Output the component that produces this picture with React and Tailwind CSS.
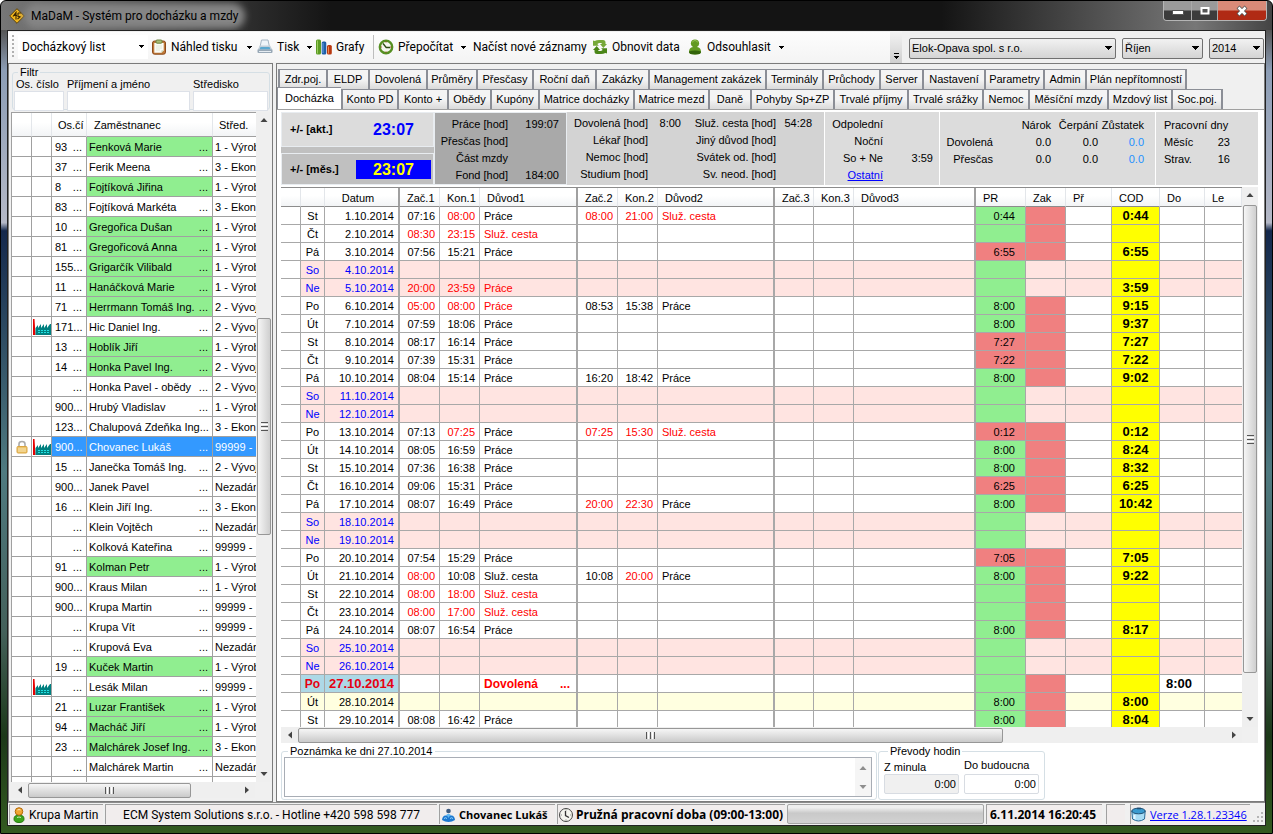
import React from "react";

const EMPLOYEES = [
  ["93", "Fenková Marie", "1 - Výrob", 1],
  ["37", "Ferik Meena", "3 - Ekon", 0],
  ["8", "Fojtíková Jiřina", "1 - Výrob", 1],
  ["83", "Fojtíková Markéta", "3 - Ekon", 0],
  ["10", "Gregořica Dušan", "1 - Výrob", 1],
  ["81", "Gregořicová Anna", "1 - Výrob", 1],
  ["155", "Grigarčík Vilibald", "1 - Výrob", 1],
  ["11", "Hanáčková Marie", "1 - Výrob", 1],
  ["71", "Herrmann Tomáš Ing.", "2 - Vývoj", 1],
  ["171", "Hic Daniel Ing.", "2 - Vývoj", 0, "factory"],
  ["13", "Hoblík Jiří", "1 - Výrob", 1],
  ["14", "Honka Pavel Ing.", "2 - Vývoj", 1],
  ["", "Honka Pavel - obědy", "2 - Vývoj", 0],
  ["900", "Hrubý Vladislav", "1 - Výrob", 0],
  ["123", "Chalupová Zdeňka Ing", "3 - Ekon", 0],
  ["900", "Chovanec Lukáš", "99999 -", 0, "factory", "selected"],
  ["15", "Janečka Tomáš Ing.", "2 - Vývoj", 0],
  ["900", "Janek Pavel", "Nezadán", 0],
  ["16", "Klein Jiří Ing.", "3 - Ekon", 0],
  ["", "Klein Vojtěch", "Nezadán", 0],
  ["", "Kolková Kateřina", "99999 -", 0],
  ["91", "Kolman Petr", "1 - Výrob", 1],
  ["900", "Kraus Milan", "1 - Výrob", 0],
  ["900", "Krupa Martin", "99999 -", 0],
  ["", "Krupa Vít", "99999 -", 0],
  ["", "Krupová Eva", "Nezadán", 0],
  ["19", "Kuček Martin", "1 - Výrob", 1],
  ["", "Lesák Milan", "99999 -", 0, "factory"],
  ["21", "Luzar František", "1 - Výrob", 1],
  ["94", "Macháč Jiří", "1 - Výrob", 1],
  ["23", "Malchárek Josef Ing.", "3 - Ekon", 1],
  ["", "Malchárek Martin", "Nezadán", 0],
  ["", "", "", 0],
];

// A leading "!" marks a value entered by hand, which is drawn in red.
const DAYS = [
  ["St", "07:16", "!08:00", "Práce", "!08:00", "!21:00", "!Služ. cesta", "0:44", "0:44"],
  ["Čt", "!08:30", "!23:15", "!Služ. cesta"],
  ["Pá", "07:56", "15:21", "Práce", "", "", "", "!6:55", "6:55"],
  ["So"],
  ["Ne", "!20:00", "!23:59", "!Práce", "", "", "", "", "3:59"],
  ["Po", "!05:00", "!08:00", "!Práce", "08:53", "15:38", "Práce", "8:00", "9:15"],
  ["Út", "07:59", "18:06", "Práce", "", "", "", "8:00", "9:37"],
  ["St", "08:17", "16:14", "Práce", "", "", "", "!7:27", "7:27"],
  ["Čt", "07:39", "15:31", "Práce", "", "", "", "!7:22", "7:22"],
  ["Pá", "08:04", "15:14", "Práce", "16:20", "18:42", "Práce", "8:00", "9:02"],
  ["So"],
  ["Ne"],
  ["Po", "07:13", "!07:25", "Práce", "!07:25", "!15:30", "!Služ. cesta", "!0:12", "0:12"],
  ["Út", "08:05", "16:59", "Práce", "", "", "", "8:00", "8:24"],
  ["St", "07:36", "16:38", "Práce", "", "", "", "8:00", "8:32"],
  ["Čt", "09:06", "15:31", "Práce", "", "", "", "!6:25", "6:25"],
  ["Pá", "08:07", "16:49", "Práce", "!20:00", "!22:30", "Práce", "8:00", "10:42"],
  ["So"],
  ["Ne"],
  ["Po", "07:54", "15:29", "Práce", "", "", "", "!7:05", "7:05"],
  ["Út", "!08:00", "10:08", "Služ. cesta", "10:08", "!20:00", "Práce", "8:00", "9:22"],
  ["St", "!08:00", "!18:00", "!Služ. cesta"],
  ["Čt", "!08:00", "!17:00", "!Služ. cesta"],
  ["Pá", "08:07", "16:54", "Práce", "", "", "", "8:00", "8:17"],
  ["So"],
  ["Ne"],
  ["Po", "", "", "!Dovolená"],
  ["Út", "", "", "", "", "", "", "8:00", "8:00"],
  ["St", "08:08", "16:42", "Práce", "", "", "", "8:00", "8:04"],
];

const TABS_TOP = [
  ["Zdr.poj.", "w-[48px]"], ["ELDP", "w-[42px]"], ["Dovolená", "w-[58px]"], ["Průměry", "w-[50px]"],
  ["Přesčasy", "w-[56px]"], ["Roční daň", "w-[63px]"], ["Zakázky", "w-[53px]"], ["Management zakázek", "w-[117px]"],
  ["Terminály", "w-[57px]"], ["Průchody", "w-[57px]"], ["Server", "w-[43px]"], ["Nastavení", "w-[62px]"],
  ["Parametry", "w-[59px]"], ["Admin", "w-[42px]"], ["Plán nepřítomností", "w-[102px]"],
];
const TABS_BOTTOM = [
  ["Konto PD", "w-[56px]"], ["Konto +", "w-[50px]"], ["Obědy", "w-[43px]"], ["Kupóny", "w-[48px]"],
  ["Matrice docházky", "w-[95px]"], ["Matrice mezd", "w-[75px]"], ["Daně", "w-[42px]"], ["Pohyby Sp+ZP", "w-[83px]"],
  ["Trvalé příjmy", "w-[74px]"], ["Trvalé srážky", "w-[75px]"], ["Nemoc", "w-[46px]"], ["Měsíční mzdy", "w-[79px]"],
  ["Mzdový list", "w-[64px]"], ["Soc.poj.", "w-[52px]"],
];

const Caret = () => (
  <svg className="h-[3px] w-[5px] shrink-0" viewBox="0 0 5 3" shapeRendering="crispEdges" aria-hidden="true"><path d="M0 0h5v1h-1v1h-1v1h-1v-1h-1v-1h-1z" fill="#000" /></svg>
);
const ArrowIcon = ({ dir }) => {
  const d = { up: "M4 2l3.5 4h-7z", down: "M4 6l3.5-4h-7z", left: "M2 4l4-3.5v7z", right: "M6 4l-4-3.5v7z" }[dir];
  return <svg className="h-2 w-2" viewBox="0 0 8 8" aria-hidden="true"><path d={d} fill="#444" /></svg>;
};

const AppIcon = () => (
  <svg className="h-4 w-4 shrink-0" viewBox="0 0 16 16" aria-hidden="true">
    <path d="M8 .7L15.3 8 8 15.3.7 8z" fill="#f0b51e" stroke="#5c4208" />
    <path d="M4 8.5L7 4.5v7M5 7.5h3M9 5h3M9 5v3.5h2.5M11.5 8.5l-3 2.5" fill="none" stroke="#3a2500" strokeWidth="1.1" />
  </svg>
);
const ClipboardIcon = () => (
  <svg className="h-4 w-4 shrink-0" viewBox="0 0 16 16" aria-hidden="true">
    <rect x="1.5" y="2" width="13" height="13.2" rx="2" fill="#c07a3a" stroke="#8c4a1c" />
    <path d="M3.3 4h9.400v7.500l-2.200 2.200H3.300z" fill="#fafbf6" />
    <path d="M12.700 11.500h-2.200v2.200z" fill="#b9c8a4" />
    <rect x="5" y="1" width="6" height="3.200" rx="1" fill="#a9bd78" stroke="#6c8440" />
    <path d="M5 7h6M5 9h6M5 11h4" stroke="#e3eada" />
  </svg>
);
const PrinterIcon = () => (
  <svg className="h-4 w-4 shrink-0" viewBox="0 0 16 16" aria-hidden="true">
    <path d="M4.500 1h6.500l1.500 7H3z" fill="#eef5fa" stroke="#a5b6c4" />
    <path d="M1 10l2-3.500h10l2 3.500v2.500H1z" fill="#c3cfd9" />
    <path d="M3.500 8h9l1 2.500h-11z" fill="#5aa8d0" />
    <path d="M.5 10.500h15V13q0 1-1 1h-13q-1 0-1-1z" fill="#98a8b6" />
    <path d="M2 12.500h12" stroke="#e6edf3" />
  </svg>
);
const ChartIcon = () => (
  <svg className="h-4 w-4 shrink-0" viewBox="0 0 16 16" aria-hidden="true">
    <rect x="0" y="0.500" width="5" height="15" rx="1.500" fill="#5c9c24" /><path d="M1.500 1.500v13" stroke="#9acb5c" />
    <rect x="5.700" y="2.500" width="4.600" height="13" rx="1.500" fill="#1f5fa8" /><path d="M7 4v10" stroke="#6ba4df" />
    <rect x="11" y="6" width="4.800" height="9.500" rx="1.500" fill="#b8380f" /><path d="M12.500 7.500v7" stroke="#ee8a50" />
  </svg>
);
const ClockIcon = ({ gray }) => (
  <svg className="h-4 w-4 shrink-0" viewBox="0 0 16 16" aria-hidden="true">
    <circle cx="8" cy="8" r={gray ? 6.5 : 6.2} fill="#f4f6ee" stroke={gray ? "#444" : "#568f22"} strokeWidth={gray ? 1 : 2.4} />
    <path d={gray ? "M7.500 4v4.500l3.500 2" : "M5 4.500L8.200 8.500h4"} fill="none" stroke={gray ? "#333" : "#2c4b10"} strokeWidth="1.300" />
    <path d="M8 2.500v1M8 12.500v1M2.800 8h1M12.300 8h1" stroke={gray ? "#777" : "#b53b20"} />
  </svg>
);
const RefreshIcon = () => (
  <svg className="h-4 w-4 shrink-0" viewBox="0 0 16 16" aria-hidden="true">
    <path d="M1 1.500l1.700.5Q4.500 1 7 1h4q2.500 0 2.500 2.500V5H15l-3.700 4L8 5h2q0-1-1.500-1H7L5.300 5l1.500 1.700H1z" fill="#76a838" />
    <path d="M15 14.500l-1.700-.5q-1.800 1-4.300 1H5q-2.500 0-2.500-2.500V11H1l3.700-4L8 11H6q0 1 1.500 1H9l1.700-1-1.500-1.700H15z" fill="#4a8518" />
  </svg>
);
const UserIcon = () => (
  <svg className="h-4 w-4 shrink-0" viewBox="0 0 16 16" aria-hidden="true">
    <path d="M2 13q0-4.500 4-5Q3.800 6.500 3.800 4.500 4 .5 8 .5t4.200 4Q12.200 6.500 10 8q4 .5 4 5 0 2.500-6 2.500T2 13z" fill="#629922" />
    <path d="M2 12.500q6-2 12 0v.5q0 2.500-6 2.500T2 13z" fill="#33640a" />
    <path d="M5.300 3.500Q6 1.500 8 1.500t2.700 2" fill="none" stroke="#94c04f" />
  </svg>
);
const FactoryIcon = () => (
  <svg className="h-[17px] w-[18px]" viewBox="0 0 18 17" aria-hidden="true">
    <path d="M0 0h1.500l1 16H0z" fill="#e60000" />
    <path d="M2.500 16V9L5 6v3l3-4v4l3-4v4l3-4v4l3-4h1v11z" fill="#008080" />
    <path d="M5 11h2v1H5zM8 11h2v1H8zM11 11h2v1h-2zM14 11h2v1h-2zM5 13h2v1H5zM8 13h2v1H8zM11 13h2v1h-2zM14 13h2v1h-2z" fill="#1ee0e0" />
  </svg>
);
const LockIcon = () => (
  <svg className="h-[14px] w-[12px]" viewBox="0 0 12 14" aria-hidden="true">
    <path d="M3 7V4q0-2.500 3-2.500T9 4v3" fill="none" stroke="#aaa" strokeWidth="1.600" />
    <rect x="1" y="6.500" width="10" height="6.500" rx="1" fill="#edc56c" stroke="#d9a441" /><path d="M2 9h8M2 11h8" stroke="#f7e3b0" />
  </svg>
);
const PersonIcon = () => (
  <svg className="h-4 w-3 shrink-0" viewBox="0 0 12 16" aria-hidden="true">
    <path d="M1 12q0-4 5-4t5 4q0 3.500-5 3.500T1 12z" fill="#3da51c" stroke="#267a0e" /><circle cx="6" cy="4.500" r="3.800" fill="#f0a531" stroke="#b26a0b" />
    <path d="M4 10.500q2-1 4 0M4.500 3q1.500-1 3 0" stroke="#fff" fill="none" opacity=".7" />
  </svg>
);
const BlueGroupIcon = () => (
  <svg className="h-[14px] w-[13px] shrink-0" viewBox="0 0 13 14" aria-hidden="true">
    <circle cx="6.500" cy="3" r="2.300" fill="#3c5a80" /><path d="M3.500 8Q6.500 3.500 9.500 8v2h-6z" fill="#62b6f0" />
    <path d="M0 12q.5-4.500 3.500-4.500Q6 7.500 6.500 10 7 7.500 9.500 7.500q3 0 3.500 4.500-3 2-6.500 2T0 12z" fill="#1c78d0" /><path d="M2 10.500q1.500-1.500 3 0M8 10.500q1.500-1.500 3 0" stroke="#9bd8ff" fill="none" />
  </svg>
);
const DatabaseIcon = () => (
  <svg className="h-[15px] w-[15px] shrink-0" viewBox="0 0 15 15" aria-hidden="true">
    <path d="M.8 4L1.500 12q6 4 12 0l.7-8z" fill="#a8dcf5" stroke="#2a6a96" /><ellipse cx="7.500" cy="4" rx="6.700" ry="2.800" fill="#3a9bd0" stroke="#1f4f74" />
    <path d="M3.500 8v4" stroke="#e7f7ff" strokeWidth="2" /><path d="M6 1.500h4" stroke="#1f4f74" strokeWidth="1.500" />
  </svg>
);

const ToolButton = ({ icon, label, caret, className = "" }) => (
  <button type="button" className={"flex h-6 items-center gap-1 whitespace-nowrap " + className}>
    {icon}<span className="grow text-left">{label}</span>{caret && <Caret />}
  </button>
);

const ComboBox = ({ label, value, className }) => (
  <div className={"relative " + className}>
    <select aria-label={label} className="block h-[21px] w-full appearance-none rounded-[2px] border border-[#707070] bg-linear-to-b from-[#f2f2f2] to-[#d4d4d4] pl-[2px] font-['Liberation_Sans',sans-serif] text-[11px] leading-4 text-black">
      <option>{value}</option>
    </select>
    <svg className="pointer-events-none absolute right-1 top-2 h-1 w-[7px]" viewBox="0 0 7 4" shapeRendering="crispEdges" aria-hidden="true"><path d="M0 0h7L3.500 4z" fill="#000" /></svg>
  </div>
);

const Tab = ({ label, width }) => (
  <button type="button" role="tab" aria-selected="false" className={"h-5 shrink-0 whitespace-nowrap border-l-2 border-t border-[#8b8e96] bg-linear-to-b from-[#f4f4f4] from-50% to-[#dadada] text-center last:border-r-2 " + width}>{label}</button>
);

const Legend = ({ children }) => (
  <legend className="ml-1 h-3 px-[2px] leading-3">{children}</legend>
);

function ScrollV({ thumb, thumbTop }) {
  return (
    <div className="flex w-4 shrink-0 flex-col items-center bg-[#efefef]">
      <div className="flex h-4 items-center"><ArrowIcon dir="up" /></div>
      <div className={"min-h-0 w-full grow " + thumbTop}>
        <div className={"mx-auto flex w-[14px] flex-col items-center justify-center gap-px rounded-[2px] border border-[#979797] bg-linear-to-r from-[#f6f6f6] to-[#cfcfcf] " + thumb}>
          <i className="h-px w-[7px] bg-[#555]" /><i className="h-px w-[7px] bg-white" /><i className="h-px w-[7px] bg-[#555]" /><i className="h-px w-[7px] bg-white" /><i className="h-px w-[7px] bg-[#555]" />
        </div>
      </div>
      <div className="flex h-4 items-center"><ArrowIcon dir="down" /></div>
    </div>
  );
}

function ScrollH({ thumb }) {
  return (
    <div className="flex h-4 items-center bg-[#efefef]">
      <div className="flex w-[17px] justify-center"><ArrowIcon dir="left" /></div>
      <div className="grow">
        <div className={"flex h-[15px] items-center justify-center gap-px rounded-[2px] border border-[#979797] bg-linear-to-b from-[#f6f6f6] to-[#cacaca] " + thumb}>
          <i className="h-[7px] w-px bg-[#555]" /><i className="h-[7px] w-px bg-white" /><i className="h-[7px] w-px bg-[#555]" /><i className="h-[7px] w-px bg-white" /><i className="h-[7px] w-px bg-[#555]" />
        </div>
      </div>
      <div className="flex w-[17px] justify-center"><ArrowIcon dir="right" /></div>
    </div>
  );
}

function TitleBar() {
  return (
    <header className="flex h-[29px] shrink-0 items-start justify-between pl-2 pr-[5px]">
      <h1 className="flex h-[29px] items-center gap-[6px] font-['Roboto',sans-serif] text-[12px] text-black">
        <AppIcon />
        <span className="rounded-full bg-[#858585] leading-3 shadow-[0_0_7px_7px_#858585]">MaDaM - Systém pro docházku a mzdy</span>
      </h1>
      <div className="flex h-5 overflow-hidden rounded-b-[4px] border border-t-0 border-[#b5b5b5]">
        <button type="button" aria-label="Minimalizovat" className="flex w-7 items-center justify-center border-r border-[#aaa] bg-linear-to-b from-[#9a9a9a] from-45% to-[#3c3c3c] to-55%"><svg className="h-3 w-3" viewBox="0 0 12 12"><rect x=".5" y="5.500" width="11" height="4" fill="#fff" stroke="#555" /></svg></button>
        <button type="button" aria-label="Maximalizovat" className="flex w-[26px] items-center justify-center border-r border-[#aaa] bg-linear-to-b from-[#9a9a9a] from-45% to-[#3c3c3c] to-55%"><svg className="h-3 w-3" viewBox="0 0 12 12"><rect x="2.500" y="3" width="7" height="5.500" fill="#555" stroke="#fff" strokeWidth="2" /></svg></button>
        <button type="button" aria-label="Zavřít" className="flex w-[48px] items-center justify-center bg-linear-to-b from-[#d98a78] from-45% to-[#b02a14] to-55%"><svg className="h-3 w-3" viewBox="0 0 12 12"><path d="M2 2l8 8M10 2l-8 8" stroke="#555" strokeWidth="4" /><path d="M2.500 2.500l7 7M9.500 2.500l-7 7" stroke="#fff" strokeWidth="2.500" /></svg></button>
      </div>
    </header>
  );
}

function Toolbar() {
  return (
    <div className="flex h-8 shrink-0 items-center bg-[#f0f0f0] pr-px">
      <div className="flex h-[30px] min-w-0 grow items-center bg-linear-to-b from-[#fdfdfd] to-[#f4f4f4] pl-1 font-['Roboto',sans-serif] text-[12px]">
        <div className="h-6 w-[2px] bg-[repeating-linear-gradient(#b0b0b0_0_2px,transparent_2px_4px)]" />
        <div className="relative ml-1 flex h-6 w-[130px] items-center bg-white">
          <select aria-label="Sestava" className="h-6 w-full appearance-none bg-transparent pl-1"><option>Docházkový list</option></select>
          <span className="pointer-events-none absolute right-1 top-[10px] flex"><Caret /></span>
        </div>
        <ToolButton icon={<ClipboardIcon />} label="Náhled tisku" caret className="ml-[3px] w-[101px]" />
        <ToolButton icon={<PrinterIcon />} label="Tisk" caret className="ml-[5px] w-[55px]" />
        <ToolButton icon={<ChartIcon />} label="Grafy" className="ml-1 w-[52px]" />
        <div className="ml-[5px] h-6 w-px bg-[#bdbdbd]" />
        <ToolButton icon={<ClockIcon />} label="Přepočítat" caret className="ml-1 w-[88px]" />
        <ToolButton label="Načíst nové záznamy" className="ml-[7px] w-[114px]" />
        <ToolButton icon={<RefreshIcon />} label="Obnovit data" className="ml-[5px] w-[90px]" />
        <ToolButton icon={<UserIcon />} label="Odsouhlasit" caret className="ml-[5px] w-[97px]" />
      </div>
      <div className="mr-1 flex h-8 w-3 flex-col items-center justify-end gap-[2px] bg-linear-to-b from-[#f4f4f4] to-[#cfcfcf] pb-1"><i className="h-px w-[5px] bg-black" /><Caret /></div>
      <div className="flex shrink-0 gap-[6px] pl-[3px] pt-[2px]">
        <ComboBox label="Firma" value="Elok-Opava spol. s r.o." className="w-[207px]" />
        <ComboBox label="Měsíc" value="Říjen" className="w-[81px]" />
        <ComboBox label="Rok" value="2014" className="w-[55px]" />
      </div>
    </div>
  );
}

function Employees() {
  const head = "h-[24px] border-r border-[#e3e6ea] font-normal text-left";
  const cell = "h-5 overflow-hidden whitespace-nowrap border-b border-r border-[#a0a0a0]";
  return (
    <aside className="flex w-[265px] shrink-0 flex-col border border-[#7b7b7b] bg-[#f0f0f0] pb-[3px] pl-[2px]">
      <fieldset className="ml-px mr-[2px] mt-[2px] h-[44px] rounded-[3px] border border-[#d5dfe5] px-px">
        <Legend>Filtr</Legend>
        <div className="flex gap-[3px] leading-3">
          <label className="w-[50px] shrink-0 whitespace-nowrap"><span className="block pl-[2px]">Os. číslo</span><input className="mt-px block h-5 w-full border border-[#dde1e8] bg-white" /></label>
          <label className="min-w-0 grow"><span className="block">Příjmení a jméno</span><input className="mt-px block h-5 w-full border border-[#dde1e8] bg-white" /></label>
          <label className="w-[75px] shrink-0"><span className="block">Středisko</span><input className="mt-px block h-5 w-full border border-[#dde1e8] bg-white" /></label>
        </div>
      </fieldset>
      <div className="mt-[2px] flex min-h-0 grow">
        <div className="min-w-0 grow overflow-hidden border-t border-[#a0a0a0] bg-white">
          <table className="w-[300px] table-fixed border-separate border-spacing-0 border-l border-[#a0a0a0]">
            <colgroup><col className="w-5" /><col className="w-5" /><col className="w-[35px]" /><col className="w-[126px]" /><col /></colgroup>
            <thead className="bg-linear-to-b from-white from-40% to-[#f1f3f5]">
              <tr>
                <th className={head + " border-b border-b-[#a0a0a0]"} /><th className={head + " border-b border-b-[#a0a0a0]"} />
                <th className={head + " overflow-hidden whitespace-nowrap border-b border-b-[#a0a0a0] pl-[6px]"}>Os.čí</th>
                <th className={head + " border-b border-b-[#a0a0a0] pl-[7px]"}>Zaměstnanec</th>
                <th className={head + " border-b border-b-[#a0a0a0] pl-[6px]"}>Střed.</th>
              </tr>
            </thead>
            <tbody>
              {EMPLOYEES.map(([no, name, dept, green, factory, selected], i) => {
                const tone = selected ? " bg-[#3399ff] text-white" : "";
                return (
                  <tr key={i}>
                    <td className={cell}>{selected && <div className="flex justify-center"><LockIcon /></div>}</td>
                    <td className={cell}>{factory && <div className="flex items-end justify-center pt-[2px]"><FactoryIcon /></div>}</td>
                    <td className={cell + " pl-[3px] pr-1" + tone}><div className="flex justify-between"><span>{no}</span>{name && <span>...</span>}</div></td>
                    <td className={cell + " pl-[2px] pr-1" + (green ? " bg-[#90ee90]" : tone)}><div className="flex justify-between"><span>{name}</span>{name && <span>...</span>}</div></td>
                    <td className={cell + " pl-[2px]" + tone}>{dept}</td>
                  </tr>
                );
              })}
            </tbody>
          </table>
        </div>
        <ScrollV thumbTop="pt-[190px]" thumb="h-[217px]" />
      </div>
      <div className="w-[244px]"><ScrollH thumb="w-[163px]" /></div>
    </aside>
  );
}

const InfoRow = ({ label, value, valueWidth = "w-9" }) => (
  <div className="flex justify-end"><span>{label}</span><span className={"text-right " + valueWidth}>{value}</span></div>
);

function Summary() {
  return (
    <section className="flex h-[73px] shrink-0 bg-[#dcdcdc] leading-[17px]">
      <div className="flex w-[153px] shrink-0 flex-col gap-[6px] bg-[#c0c0c0]">
        <div className="flex h-[35px] items-center border border-[#e8ecf0] bg-[#dcdcdc] pl-2 font-bold"><span className="w-[66px]">+/- [akt.]</span><span className="w-[75px] text-center text-[16px] text-[#0000ff]">23:07</span></div>
        <div className="flex h-8 items-center border border-[#e8ecf0] bg-[#c0c0c0] pl-2 font-bold"><span className="w-[66px]">+/- [měs.]</span><span className="h-[19px] w-[75px] bg-[#0000ff] text-center text-[16px] leading-[19px] text-[#ffff00]">23:07</span></div>
      </div>
      <div className="w-[133px] shrink-0 border border-[#e8ecf0] bg-[#a9a9a9] pr-[7px] pt-[3px]">
        <InfoRow label="Práce [hod]" value="199:07" valueWidth="w-[51px]" />
        <InfoRow label="Přesčas [hod]" valueWidth="w-[51px]" />
        <InfoRow label="Část mzdy" valueWidth="w-[51px]" />
        <InfoRow label="Fond [hod]" value="184:00" valueWidth="w-[51px]" />
      </div>
      <div className="flex w-[257px] shrink-0 bg-[#d3d3d3] pt-[3px]">
        <div className="w-[114px]">
          <InfoRow label="Dovolená [hod]" value="8:00" valueWidth="w-[33px]" />
          <InfoRow label="Lékař [hod]" valueWidth="w-[33px]" />
          <InfoRow label="Nemoc [hod]" valueWidth="w-[33px]" />
          <InfoRow label="Studium [hod]" valueWidth="w-[33px]" />
        </div>
        <div className="w-[131px]">
          <InfoRow label="Služ. cesta [hod]" value="54:28" />
          <InfoRow label="Jiný důvod [hod]" />
          <InfoRow label="Svátek od. [hod]" />
          <InfoRow label="Sv. neod. [hod]" />
        </div>
      </div>
      <div className="w-[115px] shrink-0 border-l border-white pr-[6px] pt-1">
        <InfoRow label="Odpolední" valueWidth="w-[50px]" />
        <InfoRow label="Noční" valueWidth="w-[50px]" />
        <InfoRow label="So + Ne" value="3:59" valueWidth="w-[50px]" />
        <InfoRow label={<a href="#ostatni" className="text-[#0000ff] underline">Ostatní</a>} valueWidth="w-[50px]" />
      </div>
      <div className="grid w-[216px] shrink-0 grow grid-cols-[53px_58px_47px_46px] content-start border-l border-white pt-[5px] text-right">
        <span /><span>Nárok</span><span>Čerpání</span><span>Zůstatek</span>
        <span>Dovolená</span><span>0.0</span><span>0.0</span><span className="text-[#1e90ff]">0.0</span>
        <span>Přesčas</span><span>0.0</span><span>0.0</span><span className="text-[#1e90ff]">0.0</span>
      </div>
      <div className="w-[103px] shrink-0 border-l border-white pl-[8px] pt-[5px]">
        <div>Pracovní dny</div>
        <div className="flex w-[66px] justify-between"><span>Měsíc</span><span>23</span></div>
        <div className="flex w-[66px] justify-between"><span>Strav.</span><span>16</span></div>
      </div>
    </section>
  );
}

const COLS = ["w-[20px]", "w-[24px]", "w-[75px]", "w-[40px]", "w-[40px]", "w-[98px]", "w-[40px]", "w-[40px]", "w-[117px]", "w-[39px]", "w-[40px]", "w-[122px]", "w-[50px]", "w-[40px]", "w-[46px]", "w-[48px]", "w-[45px]", "w-[37px]"];
const HEADS = ["", "", "Datum", "Zač.1", "Kon.1", "Důvod1", "Zač.2", "Kon.2", "Důvod2", "Zač.3", "Kon.3", "Důvod3", "PR", "Zak", "Př", "COD", "Do", "Le"];
const thick = (c) => (c === 2 || c === 5 || c === 8 || c === 11 ? " border-r-2" : " border-r");

function DayRow({ day, n }) {
  const weekend = day[0] === "So" || day[0] === "Ne";
  const current = n === 27;
  const tone = weekend ? " bg-[#ffe4e1]" : n === 28 ? " bg-[#ffffe0]" : "";
  const dayTone = current ? " bg-[#add8e6] font-bold text-[#e60012]" : weekend ? tone + " text-[#0000ff]" : tone;
  const base = "h-[18px] overflow-hidden whitespace-nowrap border-b border-[#a8a8a8]";
  const text = (v) => (v || "").replace("!", "");
  const red = (v) => (v && v[0] === "!" ? " text-[#ff0000]" : "");
  const time = (c, v) => <td key={c} className={base + thick(c) + tone + red(v) + " pr-1 text-right"}>{text(v)}</td>;
  const reason = (c, v) => (
    <td key={c} className={base + thick(c) + tone + red(v) + " px-1"}>
      {current && v ? <div className="flex justify-between pr-[2px] text-[12px] font-bold"><span>{text(v)}</span><span>...</span></div> : text(v)}
    </td>
  );
  return (
    <tr>
      <td className={base + " border-r"} />
      <td className={base + " border-r text-center" + (current ? " text-[12px]" : "") + dayTone}>{day[0]}</td>
      <td className={base + " border-r-2 pr-1 text-right" + (current ? " text-[13px]" : "") + dayTone}>{n}.10.2014</td>
      {time(3, day[1])}{time(4, day[2])}{reason(5, day[3])}
      {time(6, day[4])}{time(7, day[5])}{reason(8, day[6])}
      {time(9)}{time(10)}{reason(11)}
      <td className={base + " border-r pr-[10px] text-right" + (red(day[7]) ? " bg-[#f08080]" : " bg-[#90ee90]")}>{text(day[7])}</td>
      <td className={base + " border-r" + (weekend ? tone : " bg-[#f08080]")} />
      <td className={base + " border-r" + tone} />
      <td className={base + " border-r bg-[#ffff00] text-center text-[13px] font-bold"}>{day[8]}</td>
      <td className={base + " border-r pr-3 text-right text-[13px] font-bold" + tone}>{current ? "8:00" : ""}</td>
      <td className={base + tone} />
    </tr>
  );
}

function Attendance() {
  return (
    <div className="mt-[2px] flex min-h-0 grow">
      <div className="flex min-w-0 grow flex-col">
        <div className="min-h-0 grow overflow-hidden border-t border-[#8c8c8c]">
          <table className="w-full table-fixed border-separate border-spacing-0 leading-4">
            <colgroup>{COLS.map((w, i) => <col key={i} className={w} />)}</colgroup>
            <thead className="bg-linear-to-b from-white from-40% to-[#f1f3f5]">
              <tr>
                {HEADS.map((h, c) => (
                  <th key={c} className={"h-[19px] border-b border-b-[#8c8c8c] font-normal pl-[7px] pt-px " + (c === 2 ? "pr-[14px] text-center " : "text-left ") + (thick(c) === " border-r-2" ? "border-r-2 border-r-[#a0a0a0]" : "border-r border-r-[#e3e6ea]")}>{h}</th>
                ))}
              </tr>
            </thead>
            <tbody>{DAYS.map((d, i) => <DayRow key={i} day={d} n={i + 1} />)}</tbody>
          </table>
        </div>
        <ScrollH thumb="w-[705px]" />
      </div>
      <div className="flex flex-col">
        <div className="flex grow"><ScrollV thumbTop="pt-[2px]" thumb="h-[468px]" /></div>
        <div className="h-4 bg-[#f0f0f0]" />
      </div>
    </div>
  );
}

function Notes() {
  return (
    <div className="mt-[2px] flex h-[56px] shrink-0 items-start gap-px">
      <fieldset className="flex h-[55px] w-[596px] shrink-0 rounded-[3px] border border-[#d5dfe5] pl-[2px] pr-1">
        <Legend><label htmlFor="note">Poznámka ke dni 27.10.2014</label></Legend>
        <div className="flex h-10 w-full border border-[#a8adb5]">
          <textarea id="note" className="block h-full min-w-0 grow resize-none overflow-hidden bg-white" />
          <div className="flex w-4 flex-col items-center justify-around bg-[#f0f0f0] opacity-60"><ArrowIcon dir="up" /><ArrowIcon dir="down" /></div>
        </div>
      </fieldset>
      <fieldset className="h-[55px] w-[166px] shrink-0 rounded-[3px] border border-[#d5dfe5] px-[5px]">
        <Legend>Převody hodin</Legend>
        <div className="flex items-end gap-[5px] pt-[2px]">
          <label className="w-[75px]"><span className="block leading-3">Z minula</span><input readOnly defaultValue="0:00" className="mt-px block h-5 w-full rounded-[2px] border border-[#d8dce2] bg-[#f0f0f0] pr-[2px] text-right" /></label>
          <label className="w-[75px]"><span className="block pb-[2px] leading-3">Do budoucna</span><input defaultValue="0:00" className="mt-px block h-5 w-full rounded-[2px] border border-[#d8dce2] bg-white pr-[2px] text-right" /></label>
        </div>
      </fieldset>
    </div>
  );
}

const StatusCell = ({ className, children }) => (
  <div className={"flex h-5 shrink-0 items-center overflow-hidden whitespace-nowrap border-l border-t border-[#a0a0a0] bg-[#f1eded] " + className}>{children}</div>
);

function StatusBar() {
  return (
    <footer className="flex h-[23px] shrink-0 items-center gap-[2px] border-t border-[#8c8c8c] bg-[#f0f0f0] pl-px font-['Roboto',sans-serif] text-[12px]">
      <StatusCell className="w-[94px] gap-1 pl-[3px]"><PersonIcon />Krupa Martin</StatusCell>
      <StatusCell className="w-[332px] justify-center">ECM System Solutions s.r.o. - Hotline +420 598 598 777</StatusCell>
      <StatusCell className="w-[116px] gap-1 pl-[2px] font-['Open_Sans',sans-serif] text-[11px] font-bold"><BlueGroupIcon />Chovanec Lukáš</StatusCell>
      <StatusCell className="w-[228px] gap-[2px] font-['Open_Sans',sans-serif] text-[12px] font-bold"><ClockIcon gray />Pružná pracovní doba (09:00-13:00)</StatusCell>
      <div role="progressbar" aria-label="Průběh" className="h-5 min-w-0 grow rounded-[2px] border border-[#a5a5a5] bg-linear-to-b from-[#efefef] from-15% via-[#c9c9c9] via-45% to-[#d2d2d2]" />
      <StatusCell className="w-[116px] pl-[3px] font-['Open_Sans',sans-serif] text-[12px] font-bold">6.11.2014 16:20:45</StatusCell>
      <StatusCell className="ml-[2px] w-[19px]" />
      <StatusCell className="ml-[3px] w-[120px] gap-1 font-['Open_Sans',sans-serif] text-[11px]"><DatabaseIcon /><a href="#verze" className="text-[#0000ff] underline">Verze 1.28.1.23346</a></StatusCell>
      <svg className="mt-[6px] mr-px h-3 w-3 shrink-0" viewBox="0 0 12 12" shapeRendering="crispEdges" aria-hidden="true"><path d="M9 1h2v2H9zM5 5h2v2H5zM9 5h2v2H9zM1 9h2v2H1zM5 9h2v2H5zM9 9h2v2H9z" fill="#b5b5b5" /></svg>
    </footer>
  );
}

export default function App() {
  return (
    <div className="flex h-screen min-w-[1273px] flex-col overflow-hidden rounded-t-[6px] border border-black bg-[linear-gradient(90deg,#777_0,#141414_26%,#141414_74%,#777_94%,#444_100%)] font-['Liberation_Sans',sans-serif] text-[11px] leading-4 text-black">
      <TitleBar />
      <div className="flex min-h-0 grow bg-[linear-gradient(#555_0,#8c9db5_5%,#b4b8c6_24%,#14284c_25%,#4f7a80_55%,#44605a_75%,#1c3818_88%,#335a20_100%)] px-[6px] pb-[7px]">
        <div className="flex min-w-0 grow flex-col border border-[#222] bg-[#f0f0f0]">
          <Toolbar />
          <div className="flex min-h-0 grow gap-[3px]">
            <Employees />
            <main className="flex min-w-0 grow flex-col border border-[#7b7b7b] pt-[5px]">
              <div role="tablist" aria-label="Sekce" className="shrink-0 leading-[15px]">
                <div className="flex pl-px">{TABS_TOP.map(([t, w]) => <Tab key={t} label={t} width={w} />)}</div>
                <div className="flex">
                  <button type="button" role="tab" aria-selected="true" className="-mt-[2px] h-[22px] w-[64px] shrink-0 border-l border-t border-[#8b8e96] bg-white text-center">Docházka</button>
                  {TABS_BOTTOM.map(([t, w]) => <Tab key={t} label={t} width={w} />)}
                </div>
              </div>
              <div className="flex min-h-0 grow flex-col border-t border-[#a0a0a0] bg-white pl-1 pr-[6px] pt-[2px]">
                <Summary />
                <Attendance />
                <Notes />
              </div>
            </main>
          </div>
          <StatusBar />
        </div>
      </div>
    </div>
  );
}
